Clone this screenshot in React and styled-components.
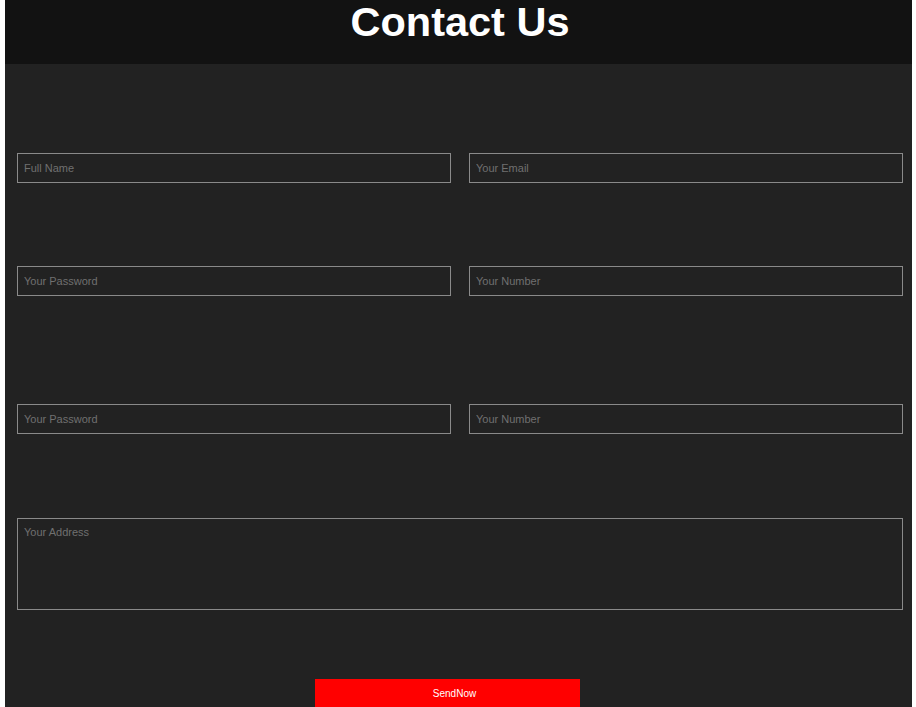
import React from 'react';
import styled, { createGlobalStyle } from 'styled-components';

const GlobalStyle = createGlobalStyle`
  html, body {
    margin: 0;
    padding: 0;
    background: #ffffff;
    font-family: "Liberation Sans", Arial, sans-serif;
  }
`;

const App = () => (
  <>
    <GlobalStyle />
    <Page>
      <Header>
        <Title>Contact Us</Title>
      </Header>
      <Form onSubmit={(e) => e.preventDefault()}>
        <Row $top={89}>
          <Field type="text" placeholder="Full Name" />
          <Field type="email" placeholder="Your Email" />
        </Row>
        <Row $top={83}>
          <Field type="password" placeholder="Your Password" />
          <Field type="text" placeholder="Your Number" />
        </Row>
        <Row $top={108}>
          <Field type="password" placeholder="Your Password" />
          <Field type="text" placeholder="Your Number" />
        </Row>
        <Address placeholder="Your Address" />
        <Actions>
          <SendButton type="submit">SendNow</SendButton>
        </Actions>
      </Form>
    </Page>
  </>
);

export default App;

const Page = styled.div`
  margin: 0 4px 0 5px;
  min-height: 707px;
  background: #222222;
  overflow: hidden;
`;

const Header = styled.header`
  height: 64px;
  background: #121212;
  display: flex;
  justify-content: center;
  padding-left: 3px;
`;

const Title = styled.h1`
  margin: 0;
  font-size: 41.5px;
  line-height: 44px;
  font-weight: 700;
  color: #ffffff;
`;

const Form = styled.form`
  display: flex;
  flex-direction: column;
  padding: 0 9px 0 12px;
`;

const Row = styled.div`
  display: grid;
  grid-template-columns: 1fr 1fr;
  column-gap: 18px;
  margin-top: ${(props) => props.$top}px;
`;

const Field = styled.input`
  box-sizing: border-box;
  height: 30px;
  width: 100%;
  padding: 0 6px;
  background: #222222;
  border: 1px solid #8a8a8a;
  color: #dddddd;
  font-family: "Liberation Sans", Arial, sans-serif;
  font-size: 11px;
  outline: none;

  &::placeholder {
    color: #707070;
  }
`;

const Address = styled.textarea`
  box-sizing: border-box;
  margin-top: 84px;
  height: 92px;
  width: 100%;
  padding: 7px 6px;
  background: #222222;
  border: 1px solid #8a8a8a;
  color: #dddddd;
  font-family: "Liberation Sans", Arial, sans-serif;
  font-size: 11px;
  resize: none;
  outline: none;

  &::placeholder {
    color: #707070;
  }
`;

const Actions = styled.div`
  display: flex;
  justify-content: center;
  margin-top: 69px;
  padding-right: 25px;
`;

const SendButton = styled.button`
  width: 265px;
  height: 28px;
  padding: 0 0 0 14px;
  background: #ff0000;
  border: none;
  color: #ffffff;
  font-family: "Liberation Sans", Arial, sans-serif;
  font-size: 10px;
  cursor: pointer;
`;
